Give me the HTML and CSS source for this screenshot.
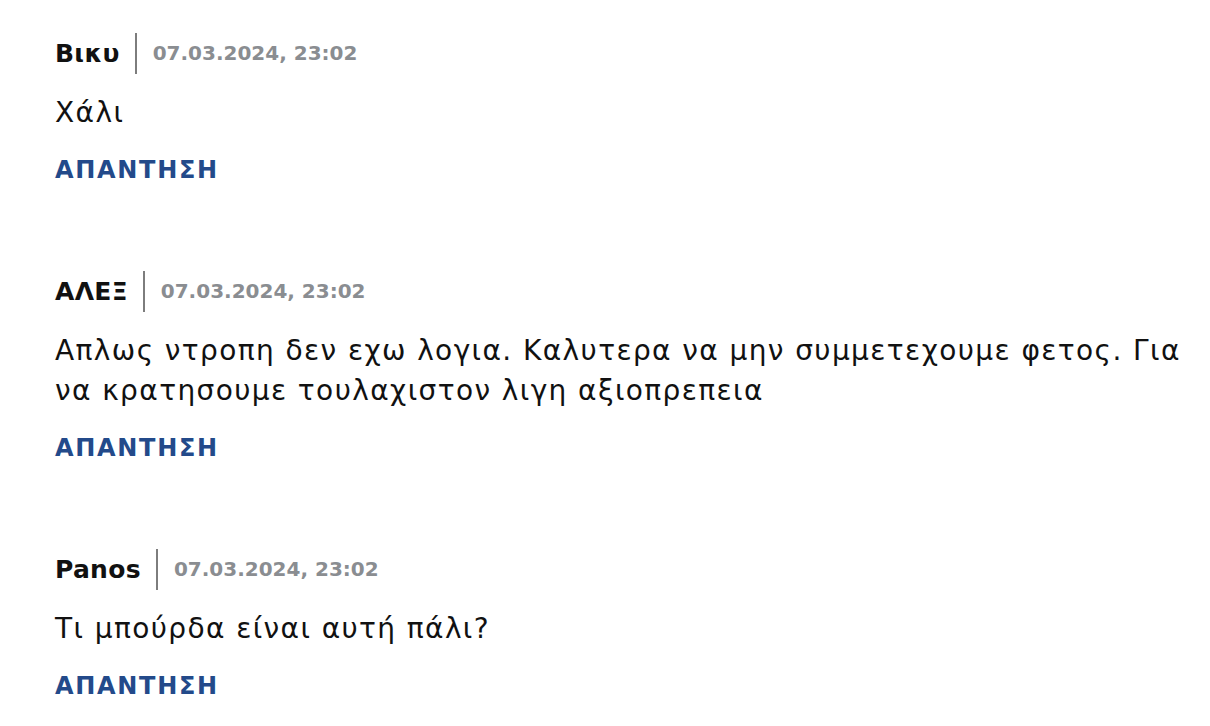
FILE: index.html
```html
<!DOCTYPE html>
<html lang="el">
<head>
<meta charset="utf-8">
<link rel="stylesheet" href="styles.css">
</head>
<body>
<div class="comments">
  <div class="comment">
    <div class="meta"><span class="name">Βικυ</span><span class="sep"></span><span class="date">07.03.2024, 23:02</span></div>
    <p class="text">Χάλι</p>
    <a class="reply">ΑΠΑΝΤΗΣΗ</a>
  </div>
  <div class="comment">
    <div class="meta"><span class="name">ΑΛΕΞ</span><span class="sep"></span><span class="date">07.03.2024, 23:02</span></div>
    <p class="text">Απλως ντροπη δεν εχω λογια. Καλυτερα να μην συμμετεχουμε φετος. Για να κρατησουμε τουλαχιστον λιγη αξιοπρεπεια</p>
    <a class="reply">ΑΠΑΝΤΗΣΗ</a>
  </div>
  <div class="comment">
    <div class="meta"><span class="name">Panos</span><span class="sep"></span><span class="date">07.03.2024, 23:02</span></div>
    <p class="text">Τι μπούρδα είναι αυτή πάλι?</p>
    <a class="reply">ΑΠΑΝΤΗΣΗ</a>
  </div>
</div>
</body>
</html>
```
FILE: styles.css
```css
html, body {
  margin: 0;
  padding: 0;
  background: #ffffff;
}
.comments {
  padding: 32px 16px 0 55px;
  display: flex;
  flex-direction: column;
  gap: 80px;
}
.comment {
  display: flex;
  flex-direction: column;
  align-items: flex-start;
}
.meta {
  display: flex;
  align-items: center;
  height: 42px;
}
.name {
  font-family: "DejaVu Sans", sans-serif;
  font-weight: 700;
  font-size: 25px;
  letter-spacing: 0.3px;
  color: #111;
}
.sep {
  width: 2px;
  height: 41px;
  background: #7d7d7d;
  margin: 0 16px 0 15px;
}
.date {
  font-family: "DejaVu Sans", sans-serif;
  font-weight: 700;
  font-size: 20px;
  color: #8a8d91;
}
.text {
  margin: 19px 0 0;
  font-family: "DejaVu Sans", sans-serif;
  font-size: 28px;
  letter-spacing: 1.4px;
  line-height: 40px;
  color: #111;
}
.reply {
  margin-top: 17px;
  font-family: "DejaVu Sans", sans-serif;
  font-weight: 700;
  font-size: 24px;
  letter-spacing: 1.7px;
  line-height: 40px;
  color: #234a8a;
}
```
